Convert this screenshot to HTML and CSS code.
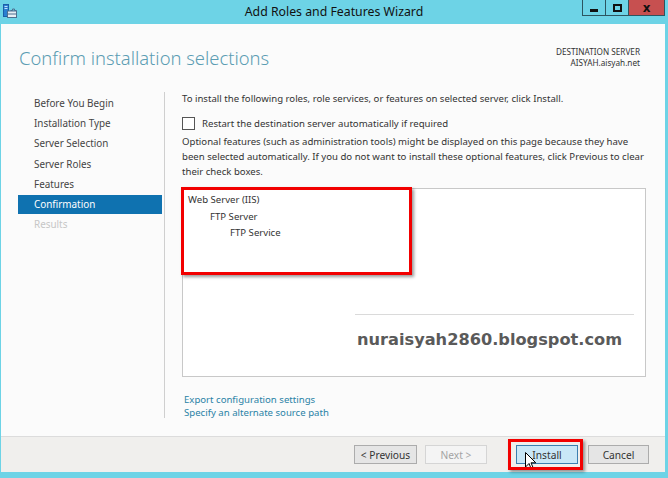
FILE: index.html
```html
<!DOCTYPE html>
<html lang="en">
<head>
  <meta charset="UTF-8" />
  <title>Add Roles and Features Wizard</title>
  <link rel="stylesheet" href="styles.css">
</head>
<body>

  <div class="window">
    <!-- Title bar -->
    <div class="titlebar">
      <svg class="app-icon" width="14" height="14" viewBox="0 0 14 14">
        <rect x="0.5" y="0.5" width="5" height="12" fill="#2a7fd0" stroke="#1b5ea8"/>
        <rect x="1.5" y="2" width="3" height="1" fill="#bfe0ff"/>
        <rect x="1.5" y="4" width="3" height="1" fill="#bfe0ff"/>
        <path d="M7.5 6.5 h2 v-1.5 h2 v1.5 h2" fill="none" stroke="#4d6f8f"/>
        <rect x="4.5" y="7" width="9" height="6.5" fill="#e8eef4" stroke="#4d6f8f"/>
        <rect x="5" y="9.5" width="8" height="1" fill="#4d6f8f"/>
      </svg>
      <div class="title">Add Roles and Features Wizard</div>
      <div class="controls">
        <span class="ctl min"><i></i></span>
        <span class="ctl max"><i></i></span>
        <span class="ctl close">x</span>
      </div>
    </div>

    <div class="frame">
      <!-- Header -->
      <div class="header">
        <h1>Confirm installation selections</h1>
        <div class="dest">
          <div>DESTINATION SERVER</div>
          <div>AISYAH.aisyah.net</div>
        </div>
      </div>

      <div class="main">
        <!-- Steps -->
        <ul class="steps">
          <li>Before You Begin</li>
          <li>Installation Type</li>
          <li>Server Selection</li>
          <li>Server Roles</li>
          <li>Features</li>
          <li class="active">Confirmation</li>
          <li class="disabled">Results</li>
        </ul>

        <!-- Content -->
        <div class="content">
          <p class="intro">To install the following roles, role services, or features on selected server, click Install.</p>
          <label class="check-row"><span class="checkbox"></span>Restart the destination server automatically if required</label>
          <p class="note">Optional features (such as administration tools) might be displayed on this page because they have been selected automatically. If you do not want to install these optional features, click Previous to clear their check boxes.</p>

          <div class="listbox">
            <div class="lvl0">Web Server (IIS)</div>
            <div class="lvl1">FTP Server</div>
            <div class="lvl2">FTP Service</div>
            <div class="mark-box"></div>
            <div class="watermark">nuraisyah2860.blogspot.com</div>
          </div>

          <div class="links">
            <a href="#">Export configuration settings</a>
            <a href="#">Specify an alternate source path</a>
          </div>
        </div>
      </div>

      <!-- Footer buttons -->
      <div class="footer">
        <button class="btn prev">&lt; Previous</button>
        <button class="btn next disabled">Next &gt;</button>
        <span class="install-wrap">
          <button class="btn primary">Install</button>
          <svg class="cursor" width="12" height="19" viewBox="0 0 12 19">
            <path d="M0.5 0.5 L0.5 15 L4 11.5 L6.5 17.5 L8.5 16.6 L6 10.8 L10.8 10.8 Z" fill="#fff" stroke="#000"/>
          </svg>
        </span>
        <button class="btn cancel">Cancel</button>
      </div>
    </div>
  </div>

</body>
</html>
```

FILE: styles.css
```css
/* Reset & Base */
* {
  margin: 0;
  padding: 0;
  box-sizing: border-box;
}

body {
  width: 668px;
  height: 478px;
  overflow: hidden;
  background-color: #6dd3e6;
  font-family: "Noto Sans", "Open Sans", sans-serif;
  color: #333;
}

.window {
  display: flex;
  flex-direction: column;
  height: 478px;
}

/* Title bar */
.titlebar {
  height: 24px;
  display: grid;
  grid-template-columns: 1fr auto 1fr;
  align-items: start;
}

.app-icon {
  margin: 4px 0 0 3px;
}

.title {
  font-size: 12.3px;
  line-height: 24px;
  color: #111;
}

.controls {
  justify-self: end;
  display: flex;
  margin-right: 3px;
}

.ctl {
  width: 23px;
  height: 16px;
  border: 1px solid #2c5560;
  border-top: none;
  border-right: none;
  display: flex;
  align-items: center;
  justify-content: center;
}

.ctl.min i {
  width: 8px;
  height: 3px;
  background: #111;
  margin-top: 5px;
}

.ctl.max i {
  width: 9px;
  height: 8px;
  border: 2px solid #111;
}

.ctl.close {
  width: 37px;
  background-color: #c75050;
  border-right: 1px solid #2c5560;
  font-family: "DejaVu Sans", sans-serif;
  font-weight: bold;
  font-size: 12px;
  line-height: 14px;
  color: #111;
}

/* Frame */
.frame {
  height: 448px;
  margin: 0 3px 0 1px;
  background-color: #fbfbfb;
  display: flex;
  flex-direction: column;
}

.header {
  height: 64px;
  display: flex;
  justify-content: space-between;
  align-items: flex-start;
  padding: 0 25px 0 18px;
}

.header h1 {
  margin-top: 21px;
  font-size: 18.4px;
  line-height: 26px;
  font-weight: 300;
  color: #5b9db3;
}

.dest {
  margin-top: 22px;
  font-size: 8.2px;
  line-height: 11px;
  text-align: right;
  color: #333;
}

.main {
  height: 348px;
  display: flex;
}

/* Steps */
.steps {
  list-style: none;
  width: 164px;
  height: 326px;
  margin-top: 4px;
  padding: 1px 2px 0 17px;
  border-right: 1px solid #cfcfcf;
}

.steps li {
  height: 20.2px;
  padding-left: 16px;
  font-size: 9.9px;
  line-height: 20px;
  color: #444;
}

.steps li.active {
  background-color: #0f72b0;
  color: #fff;
  height: 19px;
  line-height: 19px;
  margin-top: 1px;
}

.steps li.disabled {
  color: #c6c6c6;
}

/* Content */
.content {
  flex: 1;
  padding: 3px 19px 0 17px;
  font-size: 9.6px;
  line-height: 15px;
  color: #333;
}

.check-row {
  display: flex;
  align-items: center;
  margin-top: 10px;
  height: 15px;
}

.checkbox {
  width: 13px;
  height: 13px;
  border: 1px solid #555;
  background: #fff;
  margin-right: 7px;
}

.note {
  margin-top: 3px;
}

.listbox {
  position: relative;
  margin-top: 9px;
  height: 189px;
  border: 1px solid #c8c8c8;
  background-color: #fff;
  padding: 3px 0 0 5px;
  line-height: 16.5px;
}

.lvl1 { padding-left: 22px; }
.lvl2 { padding-left: 42px; }

.mark-box {
  position: absolute;
  left: -2px;
  top: -2px;
  width: 231px;
  height: 88px;
  border: 3px solid #f20000;
  box-shadow: 2px 2px 3px rgba(0, 0, 0, 0.4);
}

.watermark {
  position: absolute;
  left: 172px;
  top: 125px;
  width: 279px;
  padding: 16px 0 0 2px;
  border-top: 1px solid #dadada;
  font-family: "DejaVu Sans", sans-serif;
  font-weight: bold;
  font-size: 16.2px;
  line-height: 18px;
  color: #5a5a5a;
}

.links {
  margin-top: 16px;
  display: flex;
  flex-direction: column;
  padding-left: 2px;
  line-height: 13px;
}

.links a {
  color: #2a82a6;
  text-decoration: none;
}

/* Footer */
.footer {
  height: 36px;
  border-top: 1px solid #dcdcdc;
  background-color: #f0efed;
  display: flex;
  justify-content: flex-end;
  align-items: center;
  padding-right: 16px;
}

.btn {
  width: 62px;
  height: 19px;
  font-family: "Noto Sans", "Open Sans", sans-serif;
  font-size: 10.2px;
  color: #333;
  background-color: #e5e5e5;
  border: 1px solid #acacac;
}

.btn.prev {
  width: 63px;
  margin-right: 8px;
}

.btn.cancel {
  width: 61px;
}

.btn.disabled {
  color: #a3a3a3;
  background-color: #f4f4f4;
  border-color: #d5d5d5;
}

.install-wrap {
  position: relative;
  margin-left: 29px;
  margin-right: 10px;
  display: flex;
}

.install-wrap::after {
  content: "";
  position: absolute;
  left: -8px;
  top: -6px;
  right: -5px;
  bottom: -6px;
  border: 3px solid #f20000;
  box-shadow: 2px 2px 3px rgba(0, 0, 0, 0.4);
}

.btn.primary {
  background-color: #c9e7f7;
  border-color: #3b7fb0;
}

.install-wrap .btn + .cursor {
  position: absolute;
  left: 9px;
  top: 7px;
}
```
